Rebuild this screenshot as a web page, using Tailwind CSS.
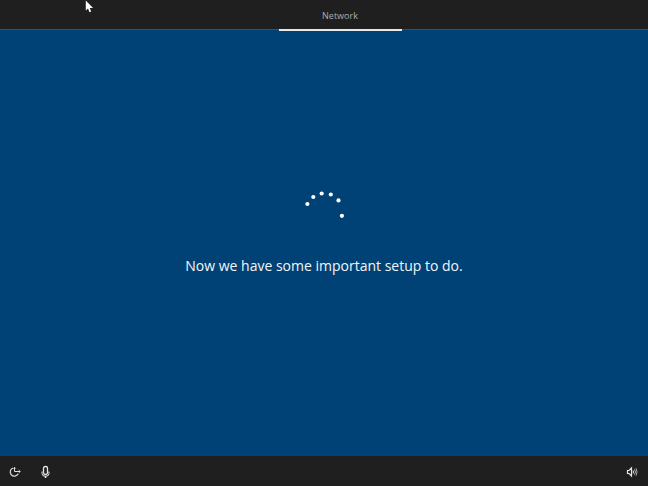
<!DOCTYPE html>
<html lang="en">

<head>
  <meta charset="UTF-8">
  <meta name="viewport" content="width=device-width, initial-scale=1">
  <title>Setup</title>
  <script src="https://cdn.jsdelivr.net/npm/@tailwindcss/browser@4"></script>
</head>

<body class="relative flex h-screen flex-col overflow-hidden bg-[#004275] font-['Open_Sans','Noto_Sans',sans-serif] text-white">
  <header class="h-[30px] bg-[#1f1f1f]">
    <nav class="flex h-full justify-center border-b border-[#4c4c4c] pl-8">
      <a href="#network" aria-current="step"
        class="-mb-0.5 flex w-[123px] items-center justify-center border-b-2 border-[#e4e9ee] pt-0.5 text-[9px] text-[#adadad]">Network</a>
    </nav>
  </header>

  <main class="flex flex-1 flex-col items-center justify-center gap-[18px] pb-5">
    <!-- progress ring -->
    <svg class="size-12" viewBox="0 0 48 48" fill="#fff" role="img" aria-label="Loading">
      <circle cx="7.4" cy="16" r="2.1" />
      <circle cx="13.3" cy="9" r="2.1" />
      <circle cx="21.7" cy="5.5" r="2.1" />
      <circle cx="30.8" cy="6.5" r="2.1" />
      <circle cx="38.5" cy="12.4" r="2.1" />
      <circle cx="41.9" cy="27.8" r="2.1" />
    </svg>
    <h1 class="text-sm leading-6 text-[#f2f6f9]">Now we have some important setup to do.</h1>
  </main>

  <footer class="flex h-[30px] items-center justify-between bg-[#1f1f1f] px-2 pt-0.5">
    <div class="flex gap-4">
      <button type="button" aria-label="Ease of access">
        <svg class="size-3.5" viewBox="0 0 14 14" fill="none" stroke="#dedede">
          <path d="M5 3A4.2 4.2 0 1 0 10.2 8.8" stroke-width="1.2" />
          <path d="M6.5 2.5V6.5H12" />
          <path d="M10.7 5l1.7 1.5-1.7 1.5M5.2 3.7L6.5 2.3l1.3 1.4" stroke-width=".8" />
        </svg>
      </button>
      <button type="button" aria-label="Microphone">
        <svg class="size-3.5" viewBox="0 0 14 14" fill="none" stroke="#e6e6e6">
          <rect x="5.5" y="1.5" width="4" height="8" rx="1.8" stroke-width="1.3" />
          <path d="M4 6.5v2a3.5 2.8 0 0 0 7 0v-2" />
          <path d="M7.5 11v2" stroke-width="1.5" />
        </svg>
      </button>
    </div>
    <button type="button" aria-label="Volume">
      <svg class="size-4" viewBox="0 0 16 16" fill="none" stroke="#e6e6e6">
        <path d="M3.5 6.5H5L7.5 4v8L5 9.5H3.5z" stroke-width="1.2" />
        <path d="M9 6.5q1 1.5 0 3" />
        <path d="M10.5 5.3q1.8 2.7 0 5.4M12 4.3q2.2 3.7 0 7.4" stroke="#b0b0b0" />
      </svg>
    </button>
  </footer>

  <!-- mouse pointer -->
  <svg class="pointer-events-none absolute top-0 left-[85px] h-[13px] w-2" viewBox="0 0 8 13" aria-hidden="true">
    <path d="M.8.5V10.5L3 8.6l1.5 3.6 1.7-.7L4.7 8H8z" fill="#fff" />
  </svg>
</body>

</html>
